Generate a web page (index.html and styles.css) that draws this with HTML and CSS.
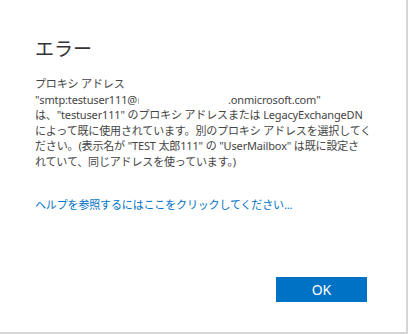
FILE: index.html
```html
<!DOCTYPE html>
<html lang="ja">
<head>
  <meta charset="UTF-8" />
  <meta name="viewport" content="width=device-width, initial-scale=1.0"/>
  <title>エラー</title>
  <link rel="stylesheet" href="styles.css">
</head>
<body>

  <div class="dialog">
    <h1 class="dialog-title">エラー</h1>

    <p class="dialog-message">
      プロキシ アドレス<br>
      "smtp:testuser111@<span class="redacted"></span>.onmicrosoft.com"<br>
      は、"testuser111" のプロキシ アドレスまたは LegacyExchangeDN<br>
      によって既に使用されています。別のプロキシ アドレスを選択してく<br>
      ださい。(表示名が "TEST 太郎111" の "UserMailbox" は既に設定さ<br>
      れていて、同じアドレスを使っています。)
    </p>

    <a class="help-link" href="#">ヘルプを参照するにはここをクリックしてください...</a>

    <div class="dialog-footer">
      <button class="btn-ok">OK</button>
    </div>
  </div>

</body>
</html>
```

FILE: styles.css
```css
* {
  box-sizing: border-box;
  margin: 0;
  padding: 0;
}

body {
  background-color: #d6d6d6;
  font-family: "Segoe UI", "Noto Sans", "Noto Sans CJK JP", sans-serif;
  width: 408px;
  height: 334px;
  overflow: hidden;
}

.dialog {
  width: 406px;
  height: 332px;
  background-color: #fff;
  display: flex;
  flex-direction: column;
  padding: 34px 39px 0 35px;
}

.dialog-title {
  font-size: 19px;
  font-weight: normal;
  line-height: 28px;
  color: #333;
  font-family: "Noto Sans CJK JP", sans-serif;
}

.dialog-message {
  margin-top: 14px;
  font-size: 11px;
  line-height: 15.6px;
  letter-spacing: -0.15px;
  color: #444;
  white-space: nowrap;
}

/* blanked out part of the address */
.redacted {
  display: inline-block;
  width: 90px;
  height: 6px;
  border-left: 1px solid #bbb;
  margin-left: 1px;
}

.help-link {
  margin-top: 27px;
  font-size: 11px;
  line-height: 16px;
  letter-spacing: -0.15px;
  color: #0072c6;
  text-decoration: none;
}

.dialog-footer {
  margin-top: 64px;
  display: flex;
  justify-content: flex-end;
}

.btn-ok {
  width: 91px;
  height: 25px;
  background-color: #0072c6;
  color: #fff;
  border: none;
  font-family: "Segoe UI", "Noto Sans", sans-serif;
  font-size: 14px;
}
```
